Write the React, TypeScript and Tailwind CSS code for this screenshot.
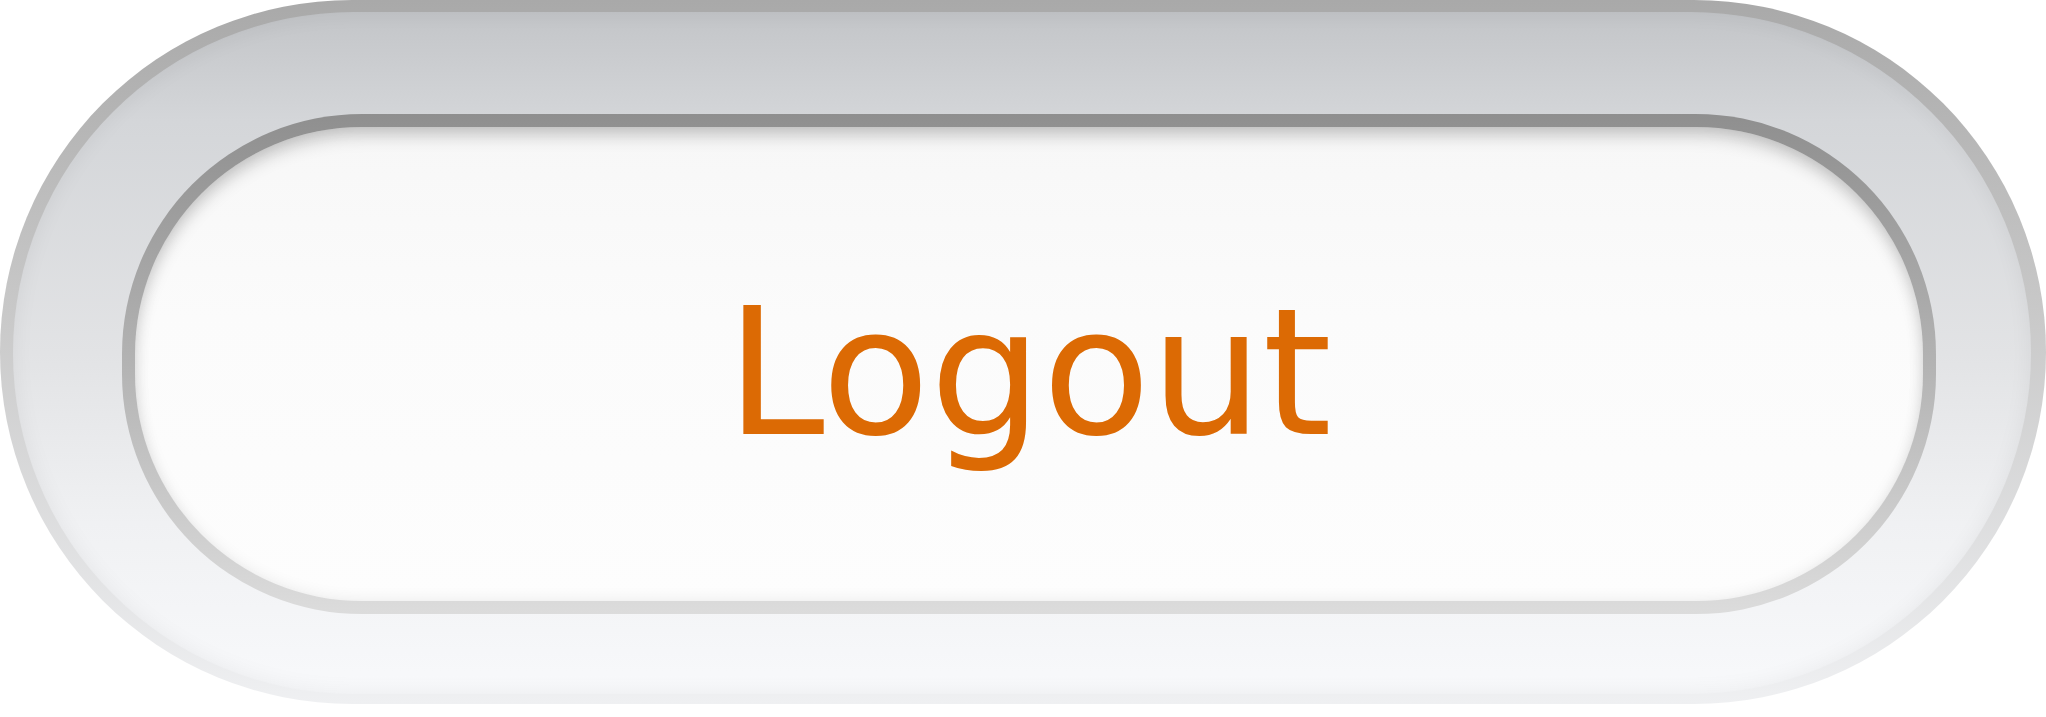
import React from 'react';

export default function App() {
  return (
    <div className="w-[2046px] h-[717px] bg-white">
      {/* outer rim */}
      <div className="h-[704px] w-[2046px] rounded-full bg-[linear-gradient(to_bottom,#a9a9a9,#c9c9c9_45%,#eff0f2)] pt-[12px] pb-[10px] pl-[13px] pr-[15px]">
        {/* outer face */}
        <div className="h-full w-full rounded-full bg-[linear-gradient(to_bottom,#c3c5c8,#d4d6d9_16%,#e2e3e5_50%,#f0f1f3_75%,#f8f9fb)] shadow-[inset_0_0_22px_rgba(0,0,0,0.06)] pl-[109px] pr-[95px] pt-[102px] pb-[80px]">
          {/* inner rim */}
          <div className="h-full w-full rounded-[240px] bg-[linear-gradient(to_bottom,#8f8f8f,#b3b3b3_50%,#dcdcdc)] p-[13px]">
            {/* inner face */}
            <button
              type="button"
              className="flex h-full w-full items-center justify-center rounded-[227px] bg-[linear-gradient(to_bottom,#f7f7f7,#fbfbfb_40%,#fdfdfd)] shadow-[inset_0_12px_18px_-4px_rgba(0,0,0,0.2),inset_0_0_16px_rgba(0,0,0,0.08)]"
            >
              <span className="mt-[19px] font-['DejaVu_Sans',sans-serif] text-[177px] leading-none text-[#dc6a04]">
                Logout
              </span>
            </button>
          </div>
        </div>
      </div>
    </div>
  );
}
